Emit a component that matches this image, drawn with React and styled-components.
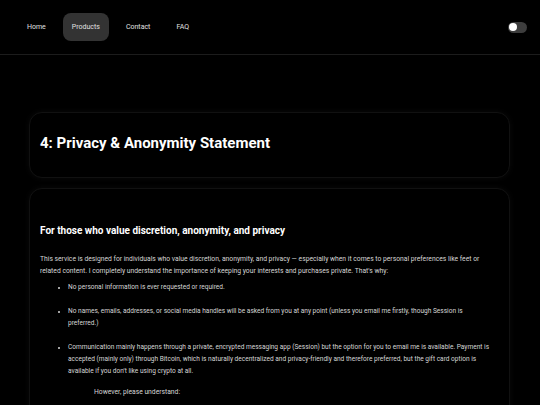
import React from 'react';
import styled, { createGlobalStyle } from 'styled-components';

const GlobalStyle = createGlobalStyle`
  html, body {
    margin: 0;
    padding: 0;
    background: #000;
    color: #fff;
    font-family: Roboto, "Liberation Sans", sans-serif;
  }
  * { box-sizing: border-box; }
`;

const StyledNav = styled.nav`
  height: 55px;
  display: flex;
  align-items: center;
  justify-content: space-between;
  padding: 0 13px 0 18px;
  border-bottom: 1px solid #1c1c1c;
`;

const StyledLinks = styled.ul`
  display: flex;
  align-items: center;
  gap: 8px;
  margin: 0;
  padding: 0;
  list-style: none;
`;

const StyledLink = styled.a`
  display: block;
  padding: 10px 9px;
  border-radius: 8px;
  font-size: 7px;
  line-height: 8px;
  color: #e0e0e0;
  text-decoration: none;
  background: ${({ active }) => (active ? '#333' : 'transparent')};
`;

const StyledToggle = styled.button`
  width: 19px;
  height: 11px;
  padding: 0 0 0 1px;
  border: none;
  border-radius: 6px;
  background: #3d3d3d;
  display: flex;
  align-items: center;
`;

const StyledKnob = styled.span`
  width: 8px;
  height: 8px;
  border-radius: 50%;
  background: #fff;
`;

const StyledMain = styled.main`
  padding: 57px 30px 0 29px;
  display: flex;
  flex-direction: column;
  gap: 10px;
`;

const StyledCard = styled.section`
  border: 1px solid #111;
  border-radius: 13px;
  background: #000;
  box-shadow: 0 0 6px rgba(255, 255, 255, 0.04);
  padding: ${({ pad }) => pad};
`;

const StyledTitle = styled.h2`
  margin: 0;
  font-size: 15px;
  line-height: 18px;
  font-weight: 700;
  color: #fff;
`;

const StyledHeading = styled.h3`
  margin: 0 0 16px;
  font-size: 10px;
  line-height: 12px;
  font-weight: 700;
  color: #fff;
`;

const StyledText = styled.p`
  margin: 0 0 4px;
  margin-left: ${({ indent }) => indent || 0}px;
  font-size: 6.75px;
  line-height: 12px;
  color: #d6d6d6;
`;

const StyledList = styled.ul`
  margin: 0 0 9px;
  padding: 0 2px 0 28px;
  display: flex;
  flex-direction: column;
  gap: 12px;
`;

const StyledItem = styled.li`
  font-size: 6.55px;
  line-height: 12px;
  color: #d6d6d6;
  &::marker {
    font-size: 5px;
  }
`;

const links = ['Home', 'Products', 'Contact', 'FAQ'];

const bullets = [
  'No personal information is ever requested or required.',
  'No names, emails, addresses, or social media handles will be asked from you at any point (unless you email me firstly, though Session is preferred.)',
  "Communication mainly happens through a private, encrypted messaging app (Session) but the option for you to email me is available. Payment is accepted (mainly only) through Bitcoin, which is naturally decentralized and privacy-friendly and therefore preferred, but the gift card option is available if you don't like using crypto at all.",
];

const App = () => (
  <>
    <GlobalStyle />
    <StyledNav>
      <StyledLinks>
        {links.map((l) => (
          <li key={l}>
            <StyledLink href="#" active={l === 'Products' ? 1 : 0}>
              {l}
            </StyledLink>
          </li>
        ))}
      </StyledLinks>
      <StyledToggle aria-label="theme">
        <StyledKnob />
      </StyledToggle>
    </StyledNav>
    <StyledMain>
      <StyledCard pad="21px 10px 25px">
        <StyledTitle>4: Privacy &amp; Anonymity Statement</StyledTitle>
      </StyledCard>
      <StyledCard pad="36px 14px 20px 10px">
        <StyledHeading>For those who value discretion, anonymity, and privacy</StyledHeading>
        <StyledText>
          This service is designed for individuals who value discretion, anonymity, and privacy — especially when it
          comes to personal preferences like feet or related content. I completely understand the importance of
          keeping your interests and purchases private. That's why:
        </StyledText>
        <StyledList>
          {bullets.map((b) => (
            <StyledItem key={b}>{b}</StyledItem>
          ))}
        </StyledList>
        <StyledText indent={54}>However, please understand:</StyledText>
      </StyledCard>
    </StyledMain>
  </>
);

export default App;
